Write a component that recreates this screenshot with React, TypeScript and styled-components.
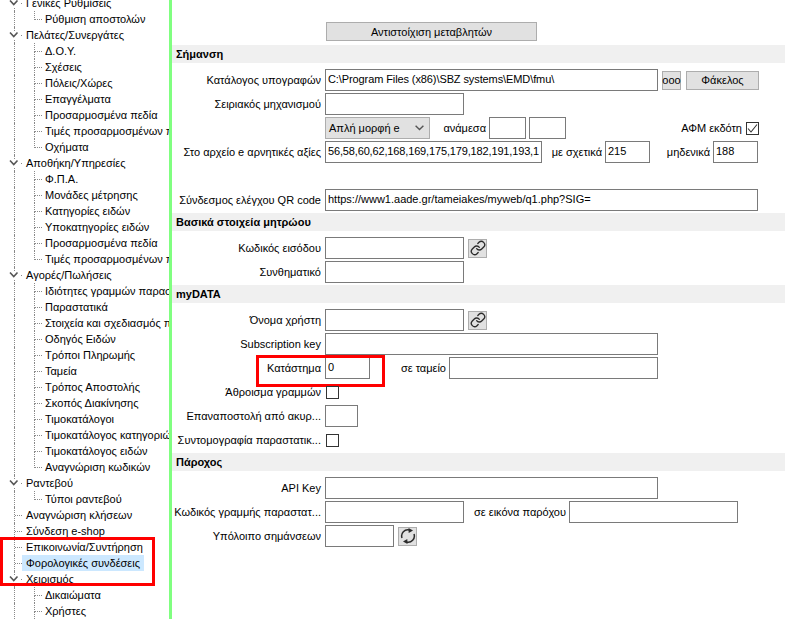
import React from 'react';
import styled, { createGlobalStyle } from 'styled-components';
import { Link as LinkGlyph } from 'lucide-react';

const GlobalStyle = createGlobalStyle`
  html, body {
    margin: 0;
    padding: 0;
    height: 100%;
    overflow: hidden;
    background: #ffffff;
  }
  body, input, button, select {
    font-family: "Liberation Sans", Arial, sans-serif;
    font-size: 11px;
    color: #000000;
  }
`;

// Tree data
type TreeItem = { label: string; level: 0 | 1; open?: boolean; last?: boolean; selected?: boolean; callout?: boolean };

const treeItems: TreeItem[] = [
  { label: 'Γενικές Ρυθμίσεις', level: 0, open: true },
  { label: 'Ρύθμιση αποστολών', level: 1, last: true },
  { label: 'Πελάτες/Συνεργάτες', level: 0, open: true },
  { label: 'Δ.Ο.Υ.', level: 1 },
  { label: 'Σχέσεις', level: 1 },
  { label: 'Πόλεις/Χώρες', level: 1 },
  { label: 'Επαγγέλματα', level: 1 },
  { label: 'Προσαρμοσμένα πεδία', level: 1 },
  { label: 'Τιμές προσαρμοσμένων π', level: 1 },
  { label: 'Οχήματα', level: 1, last: true },
  { label: 'Αποθήκη/Υπηρεσίες', level: 0, open: true },
  { label: 'Φ.Π.Α.', level: 1 },
  { label: 'Μονάδες μέτρησης', level: 1 },
  { label: 'Κατηγορίες ειδών', level: 1 },
  { label: 'Υποκατηγορίες ειδών', level: 1 },
  { label: 'Προσαρμοσμένα πεδία', level: 1 },
  { label: 'Τιμές προσαρμοσμένων π', level: 1, last: true },
  { label: 'Αγορές/Πωλήσεις', level: 0, open: true },
  { label: 'Ιδιότητες γραμμών παραστ', level: 1 },
  { label: 'Παραστατικά', level: 1 },
  { label: 'Στοιχεία και σχεδιασμός π', level: 1 },
  { label: 'Οδηγός Ειδών', level: 1 },
  { label: 'Τρόποι Πληρωμής', level: 1 },
  { label: 'Ταμεία', level: 1 },
  { label: 'Τρόπος Αποστολής', level: 1 },
  { label: 'Σκοπός Διακίνησης', level: 1 },
  { label: 'Τιμοκατάλογοι', level: 1 },
  { label: 'Τιμοκατάλογος κατηγοριώ', level: 1 },
  { label: 'Τιμοκατάλογος ειδών', level: 1 },
  { label: 'Αναγνώριση κωδικών', level: 1, last: true },
  { label: 'Ραντεβού', level: 0, open: true },
  { label: 'Τύποι ραντεβού', level: 1, last: true },
  { label: 'Αναγνώριση κλήσεων', level: 0 },
  { label: 'Σύνδεση e-shop', level: 0 },
  { label: 'Επικοινωνία/Συντήρηση', level: 0, callout: true },
  { label: 'Φορολογικές συνδέσεις', level: 0, selected: true },
  { label: 'Χειρισμός', level: 0, open: true },
  { label: 'Δικαιώματα', level: 1 },
  { label: 'Χρήστες', level: 1 },
];

const Page = styled.div`
  display: flex;
  width: 785px;
  height: 619px;
  overflow: hidden;
  background: #ffffff;
`;

const Sidebar = styled.nav`
  width: 169px;
  flex: none;
  overflow: hidden;
  position: relative;
`;

const Tree = styled.ul`
  list-style: none;
  margin: -5px 0 0;
  padding: 0;
`;

const TreeRow = styled.li<{ $level: number }>`
  position: relative;
  height: 16px;
  padding-left: ${({ $level }) => ($level === 0 ? 22 : 41)}px;
  display: flex;
  align-items: center;
  white-space: nowrap;

  /* vertical guide of the root level */
  &::before {
    content: '';
    position: absolute;
    left: 14px;
    top: 0;
    bottom: 0;
    border-left: 1px dotted #8a8a8a;
  }

  /* horizontal + vertical guide next to the label */
  &::after {
    content: '';
    position: absolute;
    left: ${({ $level }) => ($level === 0 ? 15 : 34)}px;
    top: ${({ $level }) => ($level === 0 ? 8 : 0)}px;
    width: 7px;
    height: ${({ $level }) => ($level === 0 ? 0 : 8)}px;
    border-bottom: 1px dotted #8a8a8a;
    border-left: ${({ $level }) => ($level === 0 ? 'none' : '1px dotted #8a8a8a')};
  }
`;

const SubGuide = styled.span`
  position: absolute;
  left: 34px;
  top: 8px;
  bottom: 0;
  border-left: 1px dotted #8a8a8a;
`;

const TreeLabel = styled.span<{ $selected?: boolean }>`
  display: block;
  height: 16px;
  line-height: 16px;
  padding: 0 4px;
  background: ${({ $selected }) => ($selected ? '#cce8ff' : 'transparent')};
`;

const Expander = styled.svg`
  position: absolute;
  left: 8px;
  top: 4px;
  z-index: 1;
  background: #ffffff;
`;

const SidebarCallout = styled.div`
  position: absolute;
  left: 0;
  top: -2px;
  width: 155px;
  height: 49px;
  box-sizing: border-box;
  border: 3px solid #ff0000;
  z-index: 2;
`;

const Divider = styled.div`
  width: 3px;
  flex: none;
  background: #80ff80;
`;

const Content = styled.main`
  flex: 1;
  padding-top: 22px;
`;

const TopActions = styled.div`
  padding-left: 154px;
  margin-bottom: 4px;
`;

const GrayButton = styled.button<{ $width: number }>`
  width: ${({ $width }) => $width}px;
  height: 19px;
  padding: 0;
  flex: none;
  box-sizing: border-box;
  display: inline-flex;
  align-items: center;
  justify-content: center;
  background: #e1e1e1;
  border: 1px solid #adadad;
  border-radius: 0;
`;

const SectionHeader = styled.h2`
  margin: 0 0 6px;
  height: 18px;
  line-height: 18px;
  padding-left: 4px;
  font-size: 11px;
  font-weight: 700;
  background: #f0f0f0;
`;

const Section = styled.section`
  margin-bottom: 2px;
`;

const Rows = styled.div`
  display: flex;
  flex-direction: column;
  gap: 2px;
`;

const Row = styled.div`
  position: relative;
  display: flex;
  align-items: center;
  height: 22px;
`;

const Spacer = styled.div`
  height: 22px;
`;

const Label = styled.label`
  width: 149px;
  margin-right: 4px;
  flex: none;
  text-align: right;
  white-space: nowrap;
`;

const EmptyLabel = styled.span`
  width: 153px;
  flex: none;
`;

// width holds the whole gap up to the next field, the text is pushed to its right end
const InlineLabel = styled.label<{ $width: number }>`
  width: ${({ $width }) => $width}px;
  margin-right: 3px;
  flex: none;
  text-align: right;
  white-space: nowrap;
`;

const TextInput = styled.input<{ $width: number; $spacing?: number }>`
  width: ${({ $width }) => $width}px;
  height: 22px;
  box-sizing: border-box;
  flex: none;
  padding: 0 2px 3px;
  border: 1px solid #7a7a7a;
  border-radius: 0;
  outline: none;
  background: #ffffff;
  font-size: 11px;
  letter-spacing: ${({ $spacing }) => $spacing ?? 0}px;
`;

const SelectBox = styled.div`
  width: 105px;
  height: 22px;
  flex: none;
  box-sizing: border-box;
  display: flex;
  align-items: center;
  justify-content: space-between;
  padding: 0 5px 1px 3px;
  background: #e1e1e1;
  border: 1px solid #adadad;
`;

const CheckBox = styled.span`
  width: 13px;
  height: 13px;
  box-sizing: border-box;
  flex: none;
  display: inline-flex;
  align-items: center;
  justify-content: center;
  margin-left: 1px;
  border: 1px solid #333333;
  background: #ffffff;
`;

const Gap = styled.span<{ $size?: number }>`
  width: ${({ $size }) => $size ?? 4}px;
  flex: none;
`;

const FormCallout = styled.div`
  position: absolute;
  left: 84px;
  top: -2px;
  width: 129px;
  height: 32px;
  box-sizing: border-box;
  border: 3px solid #ff0000;
  pointer-events: none;
`;

const Chevron = () => (
  <svg width="9" height="6" viewBox="0 0 9 6" fill="none" stroke="#555555" strokeWidth="1.4">
    <path d="M0.6 0.8 L4.5 4.6 L8.4 0.8" />
  </svg>
);

const RefreshIcon = () => (
  <svg width="16" height="16" viewBox="0 0 16 16" fill="none" stroke="#2b2b2b" strokeWidth="1.5">
    <path d="M2 10 A6.2 6.2 0 0 1 9.5 2" />
    <path d="M14 6 A6.2 6.2 0 0 1 6.5 14" />
    <path d="M8.5 0 L13 2.6 L8.7 5 Z" fill="#2b2b2b" stroke="none" />
    <path d="M7.5 16 L3 13.4 L7.3 11 Z" fill="#2b2b2b" stroke="none" />
  </svg>
);

const CheckMark = () => (
  <svg width="11" height="11" viewBox="0 0 11 11" fill="none" stroke="#333333" strokeWidth="1.1">
    <path d="M1 5.5 L4 9 L10 1.5" />
  </svg>
);

const App: React.FC = () => {
  return (
    <Page>
      <GlobalStyle />
      <Sidebar>
        <Tree>
          {treeItems.map((item, i) => (
            <TreeRow key={i} $level={item.level}>
              {item.level === 1 && !item.last && <SubGuide />}
              {item.open && (
                <Expander width="12" height="8" viewBox="0 0 12 8" fill="none" stroke="#555555" strokeWidth="1.6">
                  <path d="M2 1.5 L5.75 5.5 L9.5 1.5" />
                </Expander>
              )}
              <TreeLabel $selected={item.selected}>{item.label}</TreeLabel>
              {item.callout && <SidebarCallout />}
            </TreeRow>
          ))}
        </Tree>
      </Sidebar>
      <Divider />
      <Content>
        <TopActions>
          <GrayButton $width={211}>Αντιστοίχιση μεταβλητών</GrayButton>
        </TopActions>

        <Section>
          <SectionHeader>Σήμανση</SectionHeader>
          <Rows>
            <Row>
              <Label>Κατάλογος υπογραφών</Label>
              <TextInput $width={333} $spacing={-0.1} readOnly value="C:\Program Files (x86)\SBZ systems\EMD\fmu\" />
              <Gap />
              <GrayButton $width={19}>ooo</GrayButton>
              <Gap $size={5} />
              <GrayButton $width={73}>Φάκελος</GrayButton>
            </Row>
            <Row>
              <Label>Σειριακός μηχανισμού</Label>
              <TextInput $width={139} readOnly />
            </Row>
            <Row>
              <EmptyLabel />
              <SelectBox>
                Απλή μορφή e
                <Chevron />
              </SelectBox>
              <InlineLabel $width={56}>ανάμεσα</InlineLabel>
              <TextInput $width={37} readOnly />
              <Gap $size={3} />
              <TextInput $width={37} readOnly />
              <InlineLabel $width={176}>ΑΦΜ εκδότη</InlineLabel>
              <CheckBox><CheckMark /></CheckBox>
            </Row>
            <Row>
              <Label>Στο αρχείο e αρνητικές αξίες</Label>
              <TextInput $width={217} $spacing={-0.15} readOnly value="56,58,60,62,168,169,175,179,182,191,193,1" />
              <InlineLabel $width={60}>με σχετικά</InlineLabel>
              <TextInput $width={45} readOnly value="215" />
              <InlineLabel $width={60}>μηδενικά</InlineLabel>
              <TextInput $width={45} readOnly value="188" />
            </Row>
            <Spacer />
            <Row>
              <Label>Σύνδεσμος ελέγχου QR code</Label>
              <TextInput $width={433} readOnly value="https://www1.aade.gr/tameiakes/myweb/q1.php?SIG=" />
            </Row>
          </Rows>
        </Section>

        <Section>
          <SectionHeader>Βασικά στοιχεία μητρώου</SectionHeader>
          <Rows>
            <Row>
              <Label>Κωδικός εισόδου</Label>
              <TextInput $width={139} readOnly />
              <Gap />
              <GrayButton $width={19}><LinkGlyph size={16} color="#2b2b2b" strokeWidth={2} /></GrayButton>
            </Row>
            <Row>
              <Label>Συνθηματικό</Label>
              <TextInput $width={139} readOnly />
            </Row>
          </Rows>
        </Section>

        <Section>
          <SectionHeader>myDATA</SectionHeader>
          <Rows>
            <Row>
              <Label>Όνομα χρήστη</Label>
              <TextInput $width={139} readOnly />
              <Gap />
              <GrayButton $width={19}><LinkGlyph size={16} color="#2b2b2b" strokeWidth={2} /></GrayButton>
            </Row>
            <Row>
              <Label>Subscription key</Label>
              <TextInput $width={333} readOnly />
            </Row>
            <Row>
              <Label>Κατάστημα</Label>
              <TextInput $width={45} readOnly value="0" />
              <InlineLabel $width={76}>σε ταμείο</InlineLabel>
              <TextInput $width={209} readOnly />
              <FormCallout />
            </Row>
            <Row>
              <Label>Άθροισμα γραμμών</Label>
              <CheckBox />
            </Row>
            <Row>
              <Label>Επαναποστολή από ακυρ...</Label>
              <TextInput $width={33} readOnly />
            </Row>
            <Row>
              <Label>Συντομογραφία παραστατικ...</Label>
              <CheckBox />
            </Row>
          </Rows>
        </Section>

        <Section>
          <SectionHeader>Πάροχος</SectionHeader>
          <Rows>
            <Row>
              <Label>API Key</Label>
              <TextInput $width={333} readOnly />
            </Row>
            <Row>
              <Label>Κωδικός γραμμής παραστατ...</Label>
              <TextInput $width={139} readOnly />
              <InlineLabel $width={102}>σε εικόνα παρόχου</InlineLabel>
              <TextInput $width={169} readOnly />
            </Row>
            <Row>
              <Label>Υπόλοιπο σημάνσεων</Label>
              <TextInput $width={69} readOnly />
              <Gap />
              <GrayButton $width={19}><RefreshIcon /></GrayButton>
            </Row>
          </Rows>
        </Section>
      </Content>
    </Page>
  );
};

export default App;
